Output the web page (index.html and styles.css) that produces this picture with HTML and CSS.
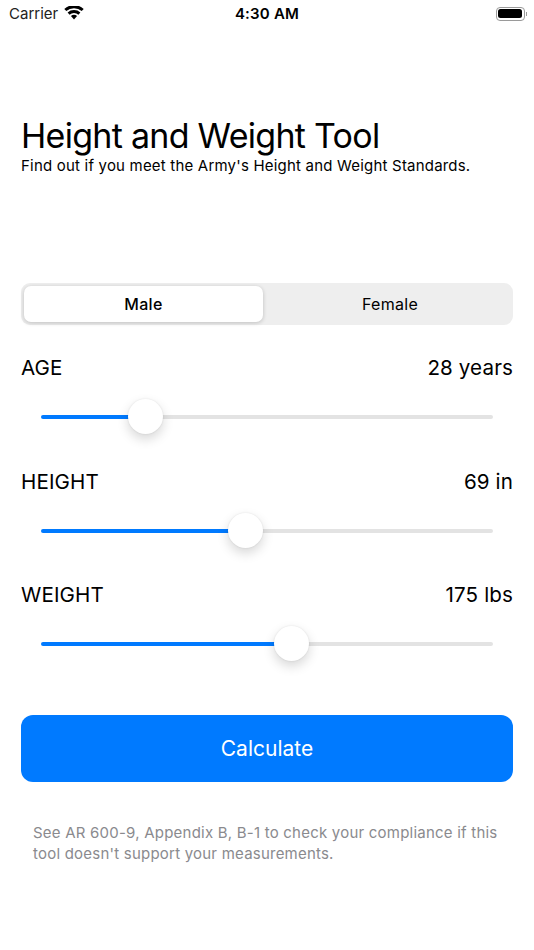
FILE: index.html
```html
<!DOCTYPE html>
<html lang="en">
<head>
<meta charset="utf-8">
<title>Height and Weight Tool</title>
<link rel="stylesheet" href="styles.css">
</head>
<body>
<div class="status">
  <div class="status-left">
    <span>Carrier</span>
    <svg class="wifi" width="20" height="14" viewBox="0 0 20 14"><path d="M10 13.6 6.9 10.1a4.6 4.6 0 0 1 6.2 0Z"/><path d="M5.6 8.7 3.6 6.5a9.6 9.6 0 0 1 12.8 0l-2 2.2a6.6 6.6 0 0 0-8.8 0Z"/><path d="M2.3 5.1.3 2.9a14.4 14.4 0 0 1 19.4 0l-2 2.2a11.5 11.5 0 0 0-15.4 0Z"/></svg>
  </div>
  <div class="status-time">4:30 AM</div>
  <div class="status-right">
    <div class="battery"><div class="battery-fill"></div></div>
    <div class="battery-cap"></div>
  </div>
</div>
<main class="content">
  <h1 class="title">Height and Weight Tool</h1>
  <p class="subtitle">Find out if you meet the Army's Height and Weight Standards.</p>
  <div class="segmented">
    <div class="segment active">Male</div>
    <div class="segment">Female</div>
  </div>
  <section class="field">
    <div class="field-head"><span>AGE</span><span>28 years</span></div>
    <div class="slider"><div class="fill" style="width:104px"></div><div class="thumb"></div><div class="rest"></div></div>
  </section>
  <section class="field">
    <div class="field-head"><span>HEIGHT</span><span>69 in</span></div>
    <div class="slider"><div class="fill" style="width:204px"></div><div class="thumb"></div><div class="rest"></div></div>
  </section>
  <section class="field">
    <div class="field-head"><span>WEIGHT</span><span>175 lbs</span></div>
    <div class="slider"><div class="fill" style="width:250px"></div><div class="thumb"></div><div class="rest"></div></div>
  </section>
  <button class="calc">Calculate</button>
  <p class="note">See AR 600-9, Appendix B, B-1 to check your compliance if this tool doesn't support your measurements.</p>
</main>
</body>
</html>
```

FILE: styles.css
```css
* { box-sizing: border-box; }
html, body { margin: 0; padding: 0; background: #fff; }
body { width: 534px; height: 950px; overflow: hidden; font-family: "Inter", "Liberation Sans", sans-serif; color: #000; }
.status { height: 27px; display: flex; align-items: center; justify-content: space-between; padding: 0 7px 0 9px; position: relative; font-size: 15px; }
.status-left { display: flex; align-items: center; gap: 6px; color: #222; }
.wifi { margin-top: -2px; fill: #000; }
.status-time { position: absolute; left: 0; right: 0; text-align: center; font-weight: 600; font-size: 15px; letter-spacing: 0.2px; }
.status-right { display: flex; align-items: center; gap: 1px; }
.battery { width: 29px; height: 14px; border: 1px solid #9a9a9a; border-radius: 4px; padding: 1.5px; }
.battery-fill { height: 100%; background: #000; border-radius: 2.5px; }
.battery-cap { width: 1.5px; height: 4px; background: #9a9a9a; }
.content { padding: 0 21px; }
.title { margin: 89px 0 0; font-size: 34px; font-weight: 400; line-height: 40px; letter-spacing: -0.72px; }
.subtitle { margin: 0; font-size: 15px; line-height: 20px; letter-spacing: 0.2px; }
.segmented { margin-top: 107px; height: 42px; background: #eeeeee; border-radius: 9px; padding: 3px; display: flex; }
.segment { flex: 1; display: flex; align-items: center; justify-content: center; font-size: 16px; font-weight: 400; letter-spacing: 0.3px; padding-left: 4px; }
.segment.active { flex: 0 0 239px; background: #fff; border-radius: 7px; box-shadow: 0 1px 4px rgba(0,0,0,.2); font-weight: 500; margin-right: 3px; padding-left: 0; }
.field { margin-top: 29px; }
.field + .field { margin-top: 30.5px; }
.field-head { display: flex; justify-content: space-between; font-size: 20.6px; line-height: 28px; letter-spacing: 0.12px; }
.slider { display: flex; align-items: center; height: 40px; margin: 15px 20px 0; }
.fill { height: 4px; background: #007aff; border-radius: 2px 0 0 2px; flex: none; }
.rest { flex: 1; height: 4px; background: #e3e3e3; border-radius: 0 2px 2px 0; }
.thumb { width: 35px; height: 35px; flex: none; margin: -1px -17px 0; position: relative; z-index: 1; border-radius: 50%; background: #fff; box-shadow: 0 5px 12px rgba(0,0,0,.16), 0 0 2px rgba(0,0,0,.1); }
.calc { display: block; width: 100%; height: 67px; margin-top: 51px; border: 0; border-radius: 12px; background: #007aff; color: #fff; font: 400 21px "Inter", "Liberation Sans", sans-serif; }
.note { margin: 40px 12px 0; font-size: 15px; line-height: 21px; color: #8a8a8e; letter-spacing: 0.22px; }
```
